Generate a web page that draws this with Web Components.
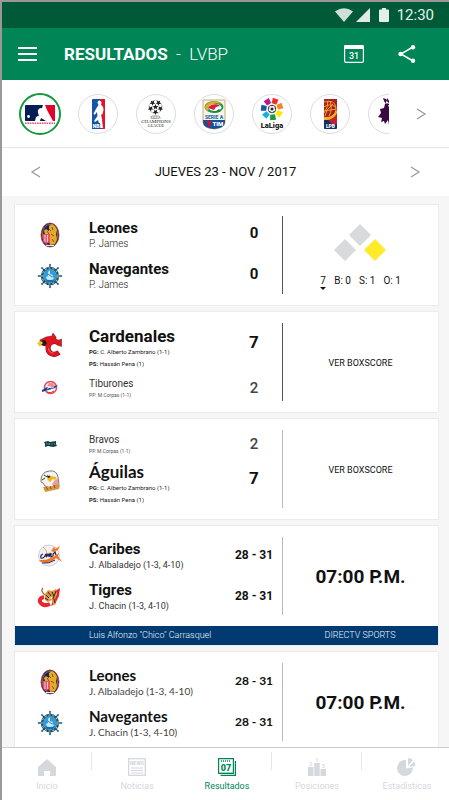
<!DOCTYPE html>
<html lang="es">
<head>
<meta charset="utf-8">
<meta name="viewport" content="width=device-width, initial-scale=1">
<title>Resultados - LVBP</title>
<style>
  html, body { height: 100%; }
  body { margin: 0; font-family: Roboto, "Liberation Sans", sans-serif; color: #111; background: #f6f6f6; }
</style>
</head>
<body>
<results-app></results-app>

<script>
const define = (name, html, setup) => {
  const template = document.createElement('template');
  template.innerHTML = html;
  customElements.define(name, class extends HTMLElement {
    constructor() {
      super();
      this.attachShadow({ mode: 'open' }).append(template.content.cloneNode(true));
    }
    connectedCallback() { if (setup) setup(this, this.shadowRoot); }
  });
};

/* ---------- artwork ---------- */
const star = (cx, cy, r) => {
  const p = [];
  for (let i = 0; i < 10; i++) {
    const a = -Math.PI / 2 + i * Math.PI / 5, q = i % 2 ? r * 0.45 : r;
    p.push((cx + q * Math.cos(a)).toFixed(1) + ',' + (cy + q * Math.sin(a)).toFixed(1));
  }
  return `<polygon points="${p.join(' ')}"/>`;
};
const ring = (n, f) => Array.from({ length: n }, (_, i) => f(360 / n * i, i)).join('');

const art = {
  mlb: [30, 20, `<rect y="1" width="30" height="16" rx="1" fill="#041e55"/><path d="M18 1h11a1 1 0 0 1 1 1v14a1 1 0 0 1-1 1h-3z" fill="#e4002b"/>
    <path d="M10 17l1-4 3-1.500L13 9q-1-5 4-5l1-3h2l2 5 6 11z" fill="#fff"/><path d="M15 17l1-3 5 3z" fill="#041e55"/><circle cx="3.500" cy="12.500" r="1.400" fill="#fff"/><path d="M0 19.200h30" stroke="#e4506b" stroke-width="1.400" stroke-dasharray="1.600 .8"/>`],
  nba: [13, 30, `<rect width="13" height="30" rx="1" fill="#1554a5"/><path d="M8 0h4a1 1 0 0 1 1 1v28a1 1 0 0 1-1 1H9L8 12z" fill="#e8112d"/>
    <path d="M7 1.500q2.500 0 2.500 2.500L9 6q2.500 1 2.500 5l-1 4-1.500 1 1 4 .8 9H8.500L6 21l-3 2-1-1 3.500-5L5 13l-2.500 3-1-1.500 3-5.500L6.500 6 5.500 4Q5.500 1.500 7 1.500z" fill="#fff"/>
    <path d="M0 24h8l1 6H1a1 1 0 0 1-1-1z" fill="#1554a5"/><text x=".8" y="28.800" font-size="5" font-weight="900" fill="#fff" font-family="Roboto">NBA</text>`],
  ucl: [30, 28, `<g fill="#222"><circle cx="14.500" cy="7" r="6.600" fill="#fff" stroke="#888" stroke-width=".5"/>${star(14.5, 7, 3)}${ring(5, a => `<g transform="rotate(${a + 36} 14.5 7)">${star(14.5, 2, 2.9)}</g>`)}</g>
    <ellipse cx="14.500" cy="17" rx="4.500" ry="1.500" fill="none" stroke="#999" stroke-width=".6"/>
    <text x="14.500" y="18.600" text-anchor="middle" font-size="4" fill="#555" font-family="Liberation Serif">UEFA</text>
    <text x="15" y="23" text-anchor="middle" font-size="5" fill="#222" font-family="Liberation Serif">CHAMPIONS</text>
    <text x="15" y="27.300" text-anchor="middle" font-size="4" fill="#222" font-family="Liberation Serif">LEAGUE</text>`],
  seriea: [24, 30, `<path d="M1 1h22v22q0 6-11 7Q1 29 1 23z" fill="#f7f5ea" stroke="#c9ae72"/><path d="M1 21h22v2q0 6-11 7Q1 29 1 23z" fill="#14509c"/>
    <ellipse cx="12" cy="8" rx="9.500" ry="6" fill="#1b9a4b"/><path d="M3 8c1-6 13-8 17-3-6-2-12 0-14 7-2-1-3-2-3-4z" fill="#e2a72e"/><ellipse cx="13" cy="8.500" rx="6.500" ry="3.500" fill="#fff"/><path d="M6 9c2-4 9-5 12-2l-4 1-2 3z" fill="#d8202e"/><path d="M8 12q5 2 9-2l2 2q-5 3-11 0z" fill="#237e3b"/>
    <text x="12" y="19.500" text-anchor="middle" font-size="5" font-weight="900" fill="#2370a9" font-family="Roboto">SERIE A</text>
    <path d="M4 22h6v2H8v4H6v-4H4z" fill="#e3062c"/><text x="10.500" y="27.300" font-size="6" font-weight="900" fill="#fff" font-family="Roboto">TIM</text>`],
  laliga: [24, 31, `${['#f32c28', '#f98222', '#ffe900', '#169b48', '#18aee0', '#1557a6', '#bd1689'].map((c, i) => `<path d="M9 0h6l-.6 5.500H9.600z" fill="${c}" transform="rotate(${20 + i * 51.4} 12 11)"/>`).join('')}
    <circle cx="12" cy="11" r="3.800" fill="#fff" stroke="#222" stroke-width=".8"/><circle cx="12" cy="11" r="1.500" fill="#222"/>${ring(5, a => `<path d="M11 7.200h2l-1 1.300z" fill="#222" transform="rotate(${a} 12 11)"/>`)}
    <text x="12" y="29.500" text-anchor="middle" font-size="7.500" font-weight="900" fill="#222" font-family="Roboto">LaLiga</text>`],
  lpb: [13, 30, `<rect width="13" height="30" rx="1" fill="#152f62"/><path d="M0 1a1 1 0 0 1 1-1h11a1 1 0 0 1 1 1v13L7 22 0 20z" fill="#a61f2b"/><path d="M13 14v11H8L5 22z" fill="#c5202f"/>
    <g fill="none" stroke="#f2a51f" stroke-width="1"><path d="M0 3q11-3 12 6 0 6-5 9"/><path d="M0 8Q5 4 12 8M0 12q7-1 12-2M1 17q1-7 8-12M5 17Q9 10 6 2M0 14q4-5 4-12"/></g>
    <path d="M0 18q9 1 13-7v3q-4 8-13 7z" fill="#f4b51e"/><text x="6.500" y="29" text-anchor="middle" font-size="5" font-weight="900" fill="#fff" font-family="Roboto">LPB</text>`],
  premier: [24, 34, `<path d="M8 4l2 3 1-6 3 4 3-5 1 5 4-3-1 6 2 3v20l-5 3-2-5-3-1-1-5-3 4-1-3-3 1 1-4-4-1 3-4-1-4 4-1 1-4 3-1-2-4-3-1z" fill="#3b0942"/><path d="M10 5l4 2 4-2M12 9l3-1" stroke="#fff" stroke-width="1" fill="none"/>`],
  leones: [20, 26, `<ellipse cx="10" cy="13" rx="9" ry="12" fill="#1b1c66" stroke="#a9382c" stroke-width=".8"/><ellipse cx="10" cy="13" rx="7.600" ry="10.600" fill="none" stroke="#d9a72c" stroke-width=".6"/>
    <path d="M9 4l3-2 3 2 2 4-1 4 1 5-2 5-5 1-1-4 1-3-5 1-2-3 2-2-1-3 2-2 3 2z" fill="#e5ab22"/><path d="M9 7l2 2M12 5l1 3M11 12l3 2M12 17l2 3M7 9l2 3" stroke="#5f4522" stroke-width=".8"/>
    <path d="M3 12h7v8l-4 2-3-3z" fill="#e8506b"/><path d="M5 13v7M7.500 13v7" stroke="#fff" stroke-width=".7"/><path d="M6 23.500h8" stroke="#dce8ff" stroke-width="1"/>`],
  navegantes: [26, 26, `<g transform="translate(13 13)">${ring(8, a => `<path d="M0-7V-11.500" stroke="#174a8b" stroke-width="1.300" transform="rotate(${a})"/><circle cy="-11.300" r="1" fill="#2a7cbb" transform="rotate(${a})"/>`)}</g>
    <circle cx="13" cy="13" r="8" fill="#79c2e5" stroke="#164a89" stroke-width="2.400"/><circle cx="13" cy="13" r="8" fill="none" stroke="#dbc636" stroke-width="1.100" stroke-dasharray="2 2"/>
    <circle cx="13" cy="13" r="6.800" fill="#2e9dd9"/><path d="M9 14l2-1V9l2-2v4l3 1-1 2 2 1-1 2h-6z" fill="#c8e9fa"/><path d="M8 16q5 2 10 0l-2 3h-6z" fill="#1570b3"/><path d="M11 11l4 3" stroke="#1360a3" stroke-width=".8"/>`],
  cardenales: [26, 24, `<path d="M21 9.500C16.500 7 11 9.500 11 15s5.500 8.500 11 4.500" fill="none" stroke="#5f151a" stroke-width="5"/><path d="M24.500 6v7.500L20 12V8z" fill="#e3141e" stroke="#5f151a" stroke-width=".5"/><path d="M3 7l6-3 6-1 1-3 3 4 0 5-6 2-5 2-5-2z" fill="#e3141e" stroke="#5f151a" stroke-width=".5"/>
    <path d="M21 9.500C16.500 7 11 9.500 11 15s5.500 8.500 11 4.500" fill="none" stroke="#e3141e" stroke-width="4.200"/><path d="M3 8l5-1 2 3-2 3-4-1z" fill="#25191a"/><path d="M0 10l4-2 2 2-2 2-1 2z" fill="#e7ca27"/><path d="M11.500 15q0 5 5 5" fill="none" stroke="#f79a9e" stroke-width=".6"/>`],
  tiburones: [18, 16, `<circle cx="9.500" cy="7.500" r="6" fill="#fff" stroke="#ed4152" stroke-width="1.500"/><path d="M6 6l2-3h4l2 3-3 1z" fill="#ef8b94"/><path d="M1 10l5-3 2 1 9-3-3 3-13 4z" fill="#17438c"/><path d="M6 9l3-2 1 1 3-1" stroke="#fff" stroke-width=".8" fill="none"/><path d="M6 12q4 2 7-1" stroke="#e52539" fill="none"/>`],
  bravos: [14, 8, `<path d="M1 2l4-1 2 1 6-1v3l1 2-4 1-5-1-3 1 0-3z" fill="#0d3c43"/><path d="M3 3h1v2M6 3v2l1-2M9 3v2M11 3l1 2" stroke="#8da7a6" stroke-width=".6" fill="none"/>`],
  aguilas: [22, 22, `<path d="M2 9q1-7 8-8 8-1 9 6l1 7-4 3-5 1-5-2-2-3-2-1z" fill="#f4f3ef" stroke="#5b5755" stroke-width=".8"/><path d="M5 5l3 2 3-1M3 10l3-2" stroke="#353434" fill="none"/><path d="M11 6l6 1 1 3-4-1-3 3-3-3z" fill="#efb916"/><path d="M8 5l4 2-3 1z" fill="#222"/><path d="M16 10l3-1v5l-4 3-2-3z" fill="#ee9ba0"/>
    <path d="M4 17l4-1 2 1 9-3 2 1-1 4-14 3z" fill="#d4983e"/><path d="M7 17l2 3M11 16l1 3M15 15l1 3" stroke="#804a20" stroke-width=".9"/>`],
  caribes: [26, 24, `<circle cx="12" cy="11.500" r="10.500" fill="#eff0f3" stroke="#c3c6ce" stroke-width=".8"/><path d="M6 3q4 3 4 7M18 3l-2 5" stroke="#f0a35f" fill="none"/><path d="M14 7l3-4 1 2 5-3-2 4-4 2z" fill="#f47a22"/>
    <path d="M2 17q9 4 17-3l6 4-4-6 1-3Q12 17 3 16z" fill="#ee7422"/><path d="M6 10q-3 1-2 4 2 1 4-2 0-2 2-2l-1 3 3-3v3l2-4v4q3-1 2-3l2-2 1 3" stroke="#262044" stroke-width="1.200" fill="none"/><path d="M5 19q7 1 13-3" stroke="#262044" fill="none"/>`],
  tigres: [24, 22, `<path d="M6 11q-5 1-4 5 3 5 10 2" stroke="#e8262b" stroke-width="4" fill="none"/><path d="M17 5l5-3-1 8-4 8-4 2 2-6 4-6z" fill="#e8262b"/><path d="M5 2q-3 3 2 7" stroke="#a46c2d" stroke-width="1.300" fill="none"/>
    <path d="M7 8l3-4 4 1 4-2 1 5-2 5 1 5-3 1-1-5-4 2-3-2z" fill="#dc953c"/><path d="M8 9l3 3M10 6l3 4M14 6l2 4M7 12l3 2M16 13l1 4M18 5l-3 8" stroke="#33231e" stroke-width="1"/><path d="M11 12l3-1v2z" fill="#fff"/>`],
  chevronLeft: [10, 12, '<path d="M9 1L1 6l8 5" fill="none" stroke="currentColor" stroke-width="1.300"/>'],
  chevronRight: [10, 12, '<path d="M1 1l8 5-8 5" fill="none" stroke="currentColor" stroke-width="1.300"/>'],
  menu: [19, 14, '<path d="M0 1h19M0 7h19M0 13h19" stroke="#fff" stroke-width="2"/>'],
  calendar: [20, 18, '<rect x=".6" y=".6" width="18.800" height="16.800" rx="1.500" fill="none" stroke="#fff" stroke-width="1.200"/><path d="M0 1.500A1.500 1.500 0 0 1 1.500 0h17A1.500 1.500 0 0 1 20 1.500V4H0z" fill="#fff"/><text x="10" y="14" text-anchor="middle" font-size="9" font-weight="500" fill="#fff" font-family="Roboto">31</text>'],
  share: [18, 18, '<path d="M15 2L3 9l12 7" fill="none" stroke="#fff" stroke-width="1.500"/><g fill="#fff"><circle cx="15" cy="2.200" r="2.200"/><circle cx="2.500" cy="9" r="2.200"/><circle cx="15" cy="15.800" r="2.200"/></g>'],
  wifi: [18, 14, '<path d="M0 3.500Q9-3 18 3.500L9 14z" fill="#cfe0d9"/>'],
  signal: [14, 14, '<path d="M14 0v14H0z" fill="#e0ebe7"/>'],
  battery: [10, 14, '<path d="M0 2.500Q0 1.500 1 1.500h2V0h4v1.500h2q1 0 1 1V13q0 1-1 1H1q-1 0-1-1z" fill="#e3efeb"/>'],
  home: [18, 18, '<path d="M9 1l9 8v8q0 1-1 1h-5v-5H6v5H1q-1 0-1-1V9z" fill="currentColor"/>'],
  news: [18, 18, '<rect x=".7" y=".7" width="16.600" height="16.600" fill="none" stroke="currentColor" stroke-width="1.300"/><text x="9" y="7.300" text-anchor="middle" font-size="5" font-weight="900" fill="currentColor" font-family="Roboto">NEWS</text><path d="M3 10h12M3 12.500h12M3 15h12" stroke="currentColor" stroke-width="1.200"/>'],
  results: [18, 18, '<path d="M.6.6h14.800v14.800H.6z" fill="#fff" stroke="currentColor" stroke-width="1.200"/><path d="M2.500 17.400h14.900V3" fill="none" stroke="currentColor" stroke-width="1.200"/><path d="M3 3h10" stroke="currentColor" stroke-width="1.500" stroke-dasharray="1 1"/><path d="M1.500 14.500h13" stroke="#9ccdb8"/><text x="8" y="13" text-anchor="middle" font-size="9" font-weight="900" fill="currentColor" font-family="Roboto">07</text>'],
  standings: [18, 18, '<path d="M0 9h5.500v9H0zM6.300 5h5.400v13H6.300zM12.500 11H18v7h-5.500z" fill="currentColor"/><g font-family="Roboto" font-size="5" font-weight="700" fill="currentColor" text-anchor="middle"><text x="2.700" y="8">2</text><text x="9" y="4">1</text><text x="15.200" y="10">3</text></g>'],
  stats: [18, 18, '<path d="M8 2v8.500l7-1A8 8 0 1 1 8 2z" fill="currentColor"/><path d="M10 0a8 8 0 0 1 5 2l-5 6z" fill="currentColor"/><path d="M16 3.500A8 8 0 0 1 17.300 8L11 8.800z" fill="currentColor"/>'],
};

define('app-art', `<style>:host{display:inline-flex;flex:none}svg{display:block;overflow:visible}</style><span></span>`, (el, root) => {
  const [w, h, body] = art[el.getAttribute('name')];
  root.querySelector('span').innerHTML = `<svg width="${w}" height="${h}" viewBox="0 0 ${w} ${h}" aria-hidden="true">${body}</svg>`;
});

/* ---------- bars ---------- */
define('status-bar', `<style>
  :host{display:flex;align-items:center;justify-content:flex-end;height:26px;padding-right:15px;background:#005a38;color:#e6f0ec}
  .wifi{margin-right:3px}.signal{margin-right:9px}.battery{margin-right:8px}
  time{font-size:15px;line-height:26px}
</style><app-art class="wifi" name="wifi"></app-art><app-art class="signal" name="signal"></app-art><app-art class="battery" name="battery"></app-art><time>12:30</time>`);

define('app-header', `<style>
  :host{display:flex;align-items:center;height:52px;padding:0 33px 0 16px;background:#008656;color:#fff}
  button{appearance:none;border:0;background:none;padding:0;display:flex;cursor:pointer;color:inherit}
  .menu{width:46px}
  h1{flex:1;margin:0;font-size:17px;line-height:24px;font-weight:700;white-space:nowrap}
  h1 span{font-weight:300;margin-left:4px}
  .share{margin-left:34px}
</style>
<button class="menu" aria-label="Menú"><app-art name="menu"></app-art></button>
<h1><slot></slot> <span>-&nbsp; <slot name="league"></slot></span></h1>
<button aria-label="Calendario"><app-art name="calendar"></app-art></button>
<button class="share" aria-label="Compartir"><app-art name="share"></app-art></button>`);

/* ---------- league picker ---------- */
define('league-badge', `<style>
  :host{display:flex;flex:0 0 58px;justify-content:center;align-items:center}
  button{box-sizing:border-box;width:40px;height:40px;padding:0;border:1px solid #dcdde2;border-radius:50%;background:#fff;display:flex;align-items:center;justify-content:center;cursor:pointer}
  :host([active]) button{width:42px;height:42px;border:2px solid #109a3c}
</style><button></button>`, (el, root) => {
  const b = root.querySelector('button');
  b.setAttribute('aria-label', el.getAttribute('label'));
  b.innerHTML = `<app-art name="${el.getAttribute('art')}"></app-art>`;
});
define('league-strip', `<style>
  :host{display:flex;height:67px;padding-left:9px;background:#fff;border-bottom:1px solid #e6e6e6}
  .list{display:flex;flex:1;min-width:0;overflow:hidden}
  button{width:60px;padding:0 0 0 4px;border:0;background:none;color:#9a9a9e;display:flex;align-items:center;justify-content:center;cursor:pointer}
</style><div class="list"><slot></slot></div><button aria-label="Más ligas"><app-art name="chevronRight"></app-art></button>`);

define('date-nav', `<style>
  :host{display:flex;align-items:center;height:48px;background:#fff}
  button{width:68px;height:48px;padding:0;border:0;background:none;color:#9a9a9e;display:flex;align-items:center;justify-content:center;cursor:pointer}
  time{flex:1;text-align:center;font-size:13px;line-height:20px;white-space:nowrap}
</style><button aria-label="Día anterior"><app-art name="chevronLeft"></app-art></button><time datetime="2017-11-23"><slot></slot></time><button aria-label="Día siguiente"><app-art name="chevronRight"></app-art></button>`);

/* ---------- games ---------- */
define('team-row', `<style>
  :host{display:flex;align-items:center}
  .logo{width:70px;display:flex;justify-content:center}
  .info{flex:1;min-width:0;padding-left:4px;white-space:nowrap}
  .name{font-size:15px;line-height:18px;font-weight:700}
  .sub{font-size:10px;line-height:14px;font-weight:300;color:#222}
  .score{width:40px;margin:0 8px 4px 0;text-align:center;white-space:nowrap;font-size:15px;line-height:20px;font-weight:700}
  :host([kind=pair]) .score{font-size:12px;margin-bottom:2px}
  :host([kind=pair]) .sub{font-size:9px;font-weight:400;color:#333}
  :host([kind=win]) .name{font-size:17px;line-height:20px;font-weight:700}
  :host([kind=win]) .sub{font-size:6px;line-height:12px;font-weight:400;font-family:Roboto,"Liberation Sans",sans-serif}
  :host([kind=win]) .logo{margin-bottom:6px}
  :host([kind=win]) .score{font-size:17px;margin-bottom:12px;font-family:Roboto,"Liberation Sans",sans-serif}
  :host([kind=lose]) .name{font-size:10px;line-height:14px;font-weight:400;color:#333}
  :host([kind=lose]) .sub{font-size:5px;line-height:8px;font-weight:400;color:#555}
  :host([kind=lose]) .score{font-weight:500;color:#444;margin-bottom:0}
  :host([lato]){font-family:Lato,"Liberation Sans",sans-serif}
  :host([lato][kind=pair]) .sub{font-size:10px;font-weight:400;color:#444}
</style><div class="logo"></div><div class="info"><div class="name"></div><div class="sub"><slot></slot></div></div><div class="score"></div>`, (el, root) => {
  root.querySelector('.name').textContent = el.getAttribute('name');
  root.querySelector('.score').textContent = el.getAttribute('score');
  root.querySelector('.logo').innerHTML = `<app-art name="${el.getAttribute('logo')}"></app-art>`;
});

define('game-card', `<style>
  :host{display:block;background:#fff;border:1px solid #ececec;flex:none}
  .body{display:flex;min-height:100px;align-items:center}
  .teams{flex:1;min-width:0;display:flex;flex-direction:column;gap:var(--row-gap,9px)}
  .side{box-sizing:border-box;flex:0 0 156px;height:78px;border-left:1px solid var(--rule,#b9b9c0);display:flex;align-items:center;justify-content:center}
</style><div class="body"><div class="teams"><slot></slot></div><div class="side"><slot name="side"></slot></div></div><slot name="footer"></slot>`);

define('game-link', `<style>:host{display:block;padding-bottom:4px}a{color:#111;text-decoration:none;font-size:9px;line-height:14px}</style><a href="#boxscore"><slot></slot></a>`);
define('game-time', `<style>:host{display:block;padding-top:2px;font-size:19px;line-height:24px;font-weight:700;white-space:nowrap}</style><slot></slot>`);
define('game-venue', `<style>
  :host{display:flex;height:19px;line-height:19px;background:#003a70;color:#eef4fa;font-size:9px;font-weight:300;white-space:nowrap}
  .place{flex:1;padding-left:74px}.tv{flex:0 0 156px;text-align:center}
</style><span class="place"><slot></slot></span><span class="tv"><slot name="tv"></slot></span>`);
define('live-state', `<style>
  :host{display:flex;flex-direction:column;align-items:center;gap:14px;padding-top:4px}
  svg{display:block}
  .count{display:flex;gap:8px;font-size:10px;line-height:12px;font-weight:400;white-space:nowrap}
  .inning{display:flex;flex-direction:column;align-items:center}
  .inning::after{content:"";border:3px solid transparent;border-top:3px solid #111;border-bottom:0}
</style>
<svg width="52" height="37" viewBox="0 0 52 37" role="img" aria-label="Corredor en primera"><path d="M26 0l11 11-11 11L15 11zM11 15l11 11-11 11L0 26z" fill="#d8dade"/><path d="M41 15l11 11-11 11-11-11z" fill="#ffeb2a"/></svg>
<div class="count"><span class="inning">7</span><span>B: 0</span><span>S: 1</span><span>O: 1</span></div>`);

/* ---------- tabs ---------- */
define('tab-item', `<style>
  :host{display:block;flex:1 0 90px}
  a{display:flex;flex-direction:column;align-items:center;gap:3px;padding-top:10px;color:#d5d8dd;text-decoration:none;font-size:9px;line-height:14px;font-weight:400}
  :host([active]) a{color:#008656}
  .rule{position:relative}
  :host([divided]) .rule::after{content:"";position:absolute;right:0;top:4px;width:1px;height:18px;background:#e3e8ec}
</style><div class="rule"><a href="#"><slot></slot></a></div>`, (el, root) => {
  const a = document.createElement('app-art');
  a.setAttribute('name', el.getAttribute('icon'));
  root.querySelector('a').prepend(a);
});
define('tab-bar', `<style>:host{display:flex;height:52px;overflow:hidden;background:#fff;border-top:1px solid #cbccd2}</style><slot></slot>`);

define('results-app', `<style>
  :host{display:flex;flex-direction:column;box-sizing:border-box;height:100vh;overflow:hidden;border:solid #999;border-width:2px 0 0 2px;background:#f6f6f6}
  status-bar,app-header,league-strip,date-nav,tab-bar{flex:none}
  main{flex:1;min-height:0;overflow:auto;scrollbar-width:none;display:flex;flex-direction:column;gap:5px;padding:8px 10px 0 12px}
  .dark{--rule:#55555c}
  .final{--row-gap:7px}
</style>
<status-bar></status-bar>
<app-header>RESULTADOS<span slot="league">LVBP</span></app-header>
<league-strip>
  <league-badge active art="mlb" label="MLB"></league-badge>
  <league-badge art="nba" label="NBA"></league-badge>
  <league-badge art="ucl" label="Champions League"></league-badge>
  <league-badge art="seriea" label="Serie A"></league-badge>
  <league-badge art="laliga" label="LaLiga"></league-badge>
  <league-badge art="lpb" label="LPB"></league-badge>
  <league-badge art="premier" label="Premier League"></league-badge>
</league-strip>
<date-nav>JUEVES 23 - NOV / 2017</date-nav>
<main>
  <game-card class="dark">
    <team-row logo="leones" name="Leones" score="0">P. James</team-row>
    <team-row logo="navegantes" name="Navegantes" score="0">P. James</team-row>
    <live-state slot="side"></live-state>
  </game-card>
  <game-card class="dark final">
    <team-row kind="win" logo="cardenales" name="Cardenales" score="7"><b>PG:</b> C. Alberto Zambrano (1-1)<br><b>PS:</b> Hassán Pena (1)</team-row>
    <team-row kind="lose" logo="tiburones" name="Tiburones" score="2">PP: M.Corpas (1-1)</team-row>
    <game-link slot="side">VER BOXSCORE</game-link>
  </game-card>
  <game-card class="final">
    <team-row kind="lose" logo="bravos" name="Bravos" score="2">PP. M.Corpas (1-1)</team-row>
    <team-row kind="win" lato logo="aguilas" name="Águilas" score="7"><b>PG:</b> C. Alberto Zambrano (1-1)<br><b>PS:</b> Hassán Pena (1)</team-row>
    <game-link slot="side">VER BOXSCORE</game-link>
  </game-card>
  <game-card>
    <team-row kind="pair" logo="caribes" name="Caribes" score="28 - 31">J. Albaladejo (1-3, 4-10)</team-row>
    <team-row kind="pair" logo="tigres" name="Tigres" score="28 - 31">J. Chacin (1-3, 4-10)</team-row>
    <game-time slot="side">07:00 P.M.</game-time>
    <game-venue slot="footer">Luis Alfonzo "Chico" Carrasquel<span slot="tv">DIRECTV SPORTS</span></game-venue>
  </game-card>
  <game-card>
    <team-row kind="pair" lato logo="leones" name="Leones" score="28 - 31">J. Albaladejo (1-3, 4-10)</team-row>
    <team-row kind="pair" lato logo="navegantes" name="Navegantes" score="28 - 31">J. Chacin (1-3, 4-10)</team-row>
    <game-time slot="side">07:00 P.M.</game-time>
  </game-card>
</main>
<tab-bar>
  <tab-item divided icon="home">Inicio</tab-item>
  <tab-item icon="news">Noticias</tab-item>
  <tab-item active divided icon="results">Resultados</tab-item>
  <tab-item divided icon="standings">Posiciones</tab-item>
  <tab-item icon="stats">Estadísticas</tab-item>
</tab-bar>`);
</script>
</body>
</html>
